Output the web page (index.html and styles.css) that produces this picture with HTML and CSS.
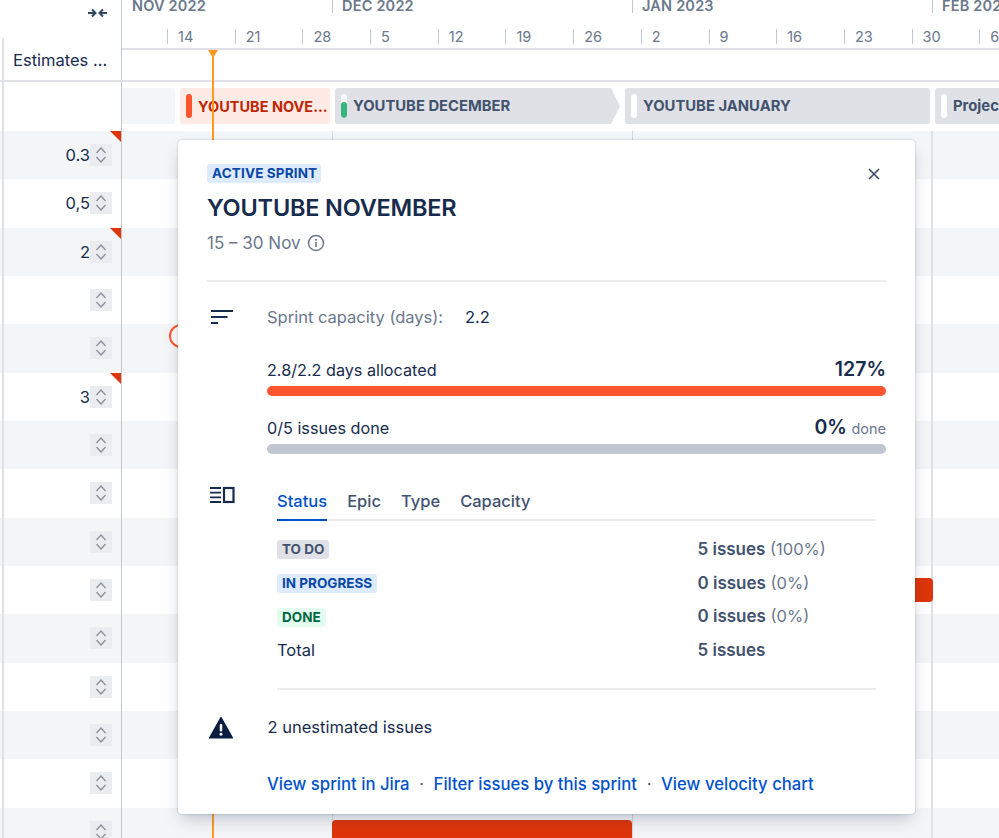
FILE: index.html
```html
<!DOCTYPE html>
<html lang="en">
<head>
<meta charset="utf-8">
<title>Sprint timeline</title>
<link rel="stylesheet" href="styles.css">
</head>
<body>
<div class="app">
  <header class="head">
    <div class="head-left">
      <div class="collapse">
        <svg width="22" height="10" viewBox="0 0 22 10"><path d="M1 5h7M5 1.500 8.500 5 5 8.500M20 5h-7M16 1.500 12.500 5 16 8.500" fill="none" stroke="#344563" stroke-width="2"/></svg>
      </div>
      <div class="col-title">Estimates ...</div>
    </div>
    <div class="head-right">
      <div class="months">
        <div class="month m-first">NOV 2022</div>
        <div class="month">DEC 2022</div>
        <div class="month">JAN 2023</div>
        <div class="month">FEB 2023</div>
      </div>
      <div class="weeks">
        <div class="week">14</div><div class="week">21</div><div class="week">28</div><div class="week">5</div><div class="week">12</div><div class="week">19</div><div class="week">26</div><div class="week">2</div><div class="week">9</div><div class="week">16</div><div class="week">23</div><div class="week">30</div><div class="week">6</div>
      </div>
      <div class="head-empty"></div>
    </div>
  </header>

  <div class="sprints">
    <div class="left-cell"></div>
    <div class="strip">
      <div class="sprint s-past"></div>
      <div class="sprint s-active"><span class="pill pill-red"></span><span class="s-name">YOUTUBE NOVE...</span></div>
      <div class="sprint s-arrow"><span class="pill pill-white"><span class="pill-green"></span></span><span class="s-name">YOUTUBE DECEMBER</span></div>
      <div class="sprint s-jan"><span class="pill pill-white"></span><span class="s-name">YOUTUBE JANUARY</span></div>
      <div class="sprint s-proj"><span class="pill pill-white"></span><span class="s-name">Project</span></div>
    </div>
  </div>

  <main class="rows">
    <div class="row alt"><div class="left-cell est flag"><span>0.3</span><span class="step"><svg width="14" height="20" viewBox="0 0 14 20"><path d="M2.500 8 7 3 11.500 8M2.500 12 7 17 11.500 12"/></svg></span></div></div>
    <div class="row"><div class="left-cell est"><span>0,5</span><span class="step"><svg width="14" height="20" viewBox="0 0 14 20"><path d="M2.500 8 7 3 11.500 8M2.500 12 7 17 11.500 12"/></svg></span></div></div>
    <div class="row alt"><div class="left-cell est flag"><span>2</span><span class="step"><svg width="14" height="20" viewBox="0 0 14 20"><path d="M2.500 8 7 3 11.500 8M2.500 12 7 17 11.500 12"/></svg></span></div></div>
    <div class="row"><div class="left-cell est"><span class="step"><svg width="14" height="20" viewBox="0 0 14 20"><path d="M2.500 8 7 3 11.500 8M2.500 12 7 17 11.500 12"/></svg></span></div></div>
    <div class="row alt"><div class="left-cell est"><span class="step"><svg width="14" height="20" viewBox="0 0 14 20"><path d="M2.500 8 7 3 11.500 8M2.500 12 7 17 11.500 12"/></svg></span></div></div>
    <div class="row"><div class="left-cell est flag"><span>3</span><span class="step"><svg width="14" height="20" viewBox="0 0 14 20"><path d="M2.500 8 7 3 11.500 8M2.500 12 7 17 11.500 12"/></svg></span></div></div>
    <div class="row alt"><div class="left-cell est"><span class="step"><svg width="14" height="20" viewBox="0 0 14 20"><path d="M2.500 8 7 3 11.500 8M2.500 12 7 17 11.500 12"/></svg></span></div></div>
    <div class="row"><div class="left-cell est"><span class="step"><svg width="14" height="20" viewBox="0 0 14 20"><path d="M2.500 8 7 3 11.500 8M2.500 12 7 17 11.500 12"/></svg></span></div></div>
    <div class="row alt"><div class="left-cell est"><span class="step"><svg width="14" height="20" viewBox="0 0 14 20"><path d="M2.500 8 7 3 11.500 8M2.500 12 7 17 11.500 12"/></svg></span></div></div>
    <div class="row"><div class="left-cell est"><span class="step"><svg width="14" height="20" viewBox="0 0 14 20"><path d="M2.500 8 7 3 11.500 8M2.500 12 7 17 11.500 12"/></svg></span></div></div>
    <div class="row alt"><div class="left-cell est"><span class="step"><svg width="14" height="20" viewBox="0 0 14 20"><path d="M2.500 8 7 3 11.500 8M2.500 12 7 17 11.500 12"/></svg></span></div></div>
    <div class="row"><div class="left-cell est"><span class="step"><svg width="14" height="20" viewBox="0 0 14 20"><path d="M2.500 8 7 3 11.500 8M2.500 12 7 17 11.500 12"/></svg></span></div></div>
    <div class="row alt"><div class="left-cell est"><span class="step"><svg width="14" height="20" viewBox="0 0 14 20"><path d="M2.500 8 7 3 11.500 8M2.500 12 7 17 11.500 12"/></svg></span></div></div>
    <div class="row"><div class="left-cell est"><span class="step"><svg width="14" height="20" viewBox="0 0 14 20"><path d="M2.500 8 7 3 11.500 8M2.500 12 7 17 11.500 12"/></svg></span></div></div>
    <div class="row alt"><div class="left-cell est"><span class="step"><svg width="14" height="20" viewBox="0 0 14 20"><path d="M2.500 8 7 3 11.500 8M2.500 12 7 17 11.500 12"/></svg></span></div></div>
    <div class="grid-line gl-1"></div>
    <div class="grid-line gl-2"></div>
    <div class="grid-line gl-3"></div>
    <div class="bar bar-end"></div>
    <div class="bar bar-bottom"></div>
    <div class="ring"></div>
  </main>

  <div class="today"></div>

  <section class="popup">
    <svg class="close" width="12" height="12" viewBox="0 0 12 12"><path d="M1 1l10 10M11 1 1 11" fill="none" stroke="#344563" stroke-width="1.500"/></svg>
    <span class="loz loz-blue loz-head">ACTIVE SPRINT</span>
    <h1 class="title">YOUTUBE NOVEMBER</h1>
    <div class="dates">15 – 30 Nov
      <svg width="18" height="18" viewBox="0 0 18 18"><circle cx="9" cy="9" r="7.500" fill="none" stroke="#6B778C" stroke-width="1.500"/><rect x="8.200" y="8" width="1.600" height="5" fill="#6B778C"/><rect x="8.200" y="5" width="1.600" height="1.700" fill="#6B778C"/></svg>
    </div>
    <hr class="rule">

    <div class="block">
      <svg class="sec-icon" width="24" height="16" viewBox="0 0 24 16"><path d="M1 2h22M1 8h16.500M1 14h7" fill="none" stroke="#172B4D" stroke-width="2.200"/></svg>
      <div class="block-body">
        <div class="capacity"><span class="cap-label">Sprint capacity (days):</span><span class="cap-value">2.2</span></div>
        <div class="meter-head h-first"><span>2.8/2.2 days allocated</span><b class="pct">127%</b></div>
        <div class="meter meter-red"></div>
        <div class="meter-head h-second"><span>0/5 issues done</span><span><b class="pct">0%</b> <span class="muted small">done</span></span></div>
        <div class="meter meter-gray"></div>
      </div>
    </div>

    <div class="block block-tabs">
      <svg class="sec-icon" width="26" height="18" viewBox="0 0 26 18"><path d="M1 2h11M1 6.700h11M1 11.300h11M1 16h11" fill="none" stroke="#172B4D" stroke-width="1.800"/><rect x="15" y="2" width="9.500" height="14" fill="none" stroke="#172B4D" stroke-width="2.200"/></svg>
      <div class="tabs-wrap">
        <nav class="tabs">
          <span class="tab tab-on">Status</span><span class="tab">Epic</span><span class="tab">Type</span><span class="tab">Capacity</span>
        </nav>
        <div class="tbl">
          <div class="tbl-row"><div class="tbl-key"><span class="loz loz-gray">TO DO</span></div><div><b>5 issues</b> <span class="muted">(100%)</span></div></div>
          <div class="tbl-row"><div class="tbl-key"><span class="loz loz-blue">IN PROGRESS</span></div><div><b>0 issues</b> <span class="muted">(0%)</span></div></div>
          <div class="tbl-row"><div class="tbl-key"><span class="loz loz-green">DONE</span></div><div><b>0 issues</b> <span class="muted">(0%)</span></div></div>
          <div class="tbl-row"><div class="tbl-key">Total</div><div><b>5 issues</b></div></div>
        </div>
        <hr class="rule rule-inner">
      </div>
    </div>

    <div class="warn">
      <svg width="24" height="24" viewBox="0.500 0.500 25 23.500"><path d="M13 1.500 24.800 22.500H1.200Z" fill="#091E42" stroke="#091E42" stroke-width="1.500" stroke-linejoin="round"/><rect x="11.700" y="8" width="2.600" height="8" rx="1.200" fill="#fff"/><circle cx="13" cy="18.800" r="1.500" fill="#fff"/></svg>
      <span>2 unestimated issues</span>
    </div>

    <div class="links">
      <a class="lnk">View sprint in Jira</a><span class="dot">·</span><a class="lnk">Filter issues by this sprint</a><span class="dot">·</span><a class="lnk">View velocity chart</a>
    </div>
  </section>
</div>
</body>
</html>
```

FILE: styles.css
```css
* { box-sizing: border-box; }
html, body { margin: 0; padding: 0; height: 100%; overflow: hidden; }
body { font-family: Inter, "Liberation Sans", sans-serif; font-size: 16.500px; color: #172B4D; background: #fff; }
.app { position: relative; width: 999px; height: 838px; overflow: hidden; }

.head { display: flex; height: 82px; border-bottom: 2px solid #DFE1E6; }
.head-left { width: 122px; flex: none; border-right: 1px solid #C1C7D0; }
.collapse { height: 38px; padding: 8px 0 0 87px; display: flex; align-items: flex-start; }
.col-title { height: 42px; margin-left: 2px; border-left: 2px solid #DFE1E6; padding-left: 9px; line-height: 44px; white-space: nowrap; }
.head-right { flex: 1; min-width: 0; overflow: hidden; }
.months { display: flex; height: 26px; }
.month { flex: none; width: 300px; height: 26px; padding-left: 10px; font-size: 14.500px; font-weight: 600; letter-spacing: .2px; color: #6B778C; line-height: 12px; white-space: nowrap; position: relative; }
.month::before { content: ""; position: absolute; left: 0; top: 0; width: 1px; height: 13px; background: #C1C7D0; }
.m-first { width: 210px; }
.m-first::before { display: none; }
.weeks { display: flex; height: 24px; padding-left: 45px; border-bottom: 2px solid #DFE1E6; }
.week { flex: none; width: 67.700px; height: 15px; margin-top: 3px; padding-left: 10px; border-left: 1px solid #C1C7D0; font-size: 14.500px; color: #6B778C; line-height: 15px; }
.head-empty { height: 30px; }

.left-cell { width: 122px; flex: none; margin-left: 0; border-right: 1px solid #C1C7D0; }
.sprints { display: flex; height: 49px; }
.sprints .left-cell { position: relative; }
.strip { flex: 1; min-width: 0; display: flex; gap: 5px; padding-top: 6px; overflow: hidden; }
.sprint { flex: none; height: 36px; border-radius: 3px; background: #DFE1E6; display: flex; align-items: center; gap: 6px; padding-left: 6px; font-size: 14.800px; font-weight: 700; color: #42526E; white-space: nowrap; }
.s-past { width: 53px; background: #F4F5F7; border-radius: 0 3px 3px 0; }
.s-active { width: 150px; background: #FFEBE6; color: #BF2600; overflow: hidden; font-size: 14.500px; }
.s-arrow { width: 285px; clip-path: polygon(0 0, 276px 0, 285px 50%, 276px 100%, 0 100%); }
.s-jan { width: 305px; }
.s-proj { width: 120px; }
.pill { width: 6px; height: 24px; border-radius: 3px; background: #fff; flex: none; display: flex; align-items: flex-end; overflow: hidden; }
.pill-red { background: #FF5630; }
.pill-green { display: block; width: 100%; height: 16px; background: #36B37E; border-radius: 3px; }

.rows { position: relative; }
.row { display: flex; height: 48.333px; }
.alt { background: #F4F5F7; }
.est { position: relative; display: flex; justify-content: flex-end; align-items: center; padding-right: 9px; }
.flag::after { content: ""; position: absolute; right: 0; top: 0; width: 0; height: 0; border-style: solid; border-width: 0 11px 11px 0; border-color: transparent #DE350B transparent transparent; }
.step { width: 22px; height: 22px; background: #EBECF0; display: flex; align-items: center; justify-content: center; }
.step svg { fill: none; stroke: #8A8F9C; stroke-width: 1.300; }
.left-cell.est::before, .sprints .left-cell::before { content: ""; position: absolute; left: 2px; top: 0; bottom: 0; width: 2px; background: #DFE1E6; }

.grid-line { position: absolute; top: 0; bottom: 0; width: 1px; background: #D3D6DC; }
.gl-1 { left: 332px; }
.gl-2 { left: 632px; }
.gl-3 { left: 931px; width: 2px; background: #DFE1E6; }
.bar { position: absolute; background: #DE350B; }
.bar-end { left: 900px; top: 447px; width: 33px; height: 24px; border-radius: 4px; }
.bar-bottom { left: 332px; top: 689px; width: 300px; height: 30px; border-radius: 4px 4px 0 0; }
.ring { position: absolute; left: 169px; top: 193px; width: 24px; height: 24px; border: 2px solid #FF5630; border-radius: 50%; background: #fff; }

.today { position: absolute; left: 212px; top: 50px; bottom: 0; width: 2px; background: #FF991F; }
.today::before { content: ""; position: absolute; left: -4px; top: 0; border-style: solid; border-width: 8px 5px 0 5px; border-color: #FF991F transparent transparent transparent; }

.popup { position: absolute; left: 178px; top: 140px; width: 737px; height: 674px; background: #fff; border-radius: 4px; box-shadow: 0 8px 16px -4px rgba(9,30,66,.25), 0 0 2px rgba(9,30,66,.31); padding: 24px 29px 0; }
.close { position: absolute; left: 690px; top: 28px; }
.loz { display: inline-block; height: 19px; padding: 0 5px; border-radius: 3px; font-size: 13.500px; font-weight: 700; line-height: 19px; white-space: nowrap; }
.loz-blue { background: #DEEBFF; color: #0747A6; }
.loz-gray { background: #DFE1E6; color: #42526E; }
.loz-green { background: #E3FCEF; color: #006644; }
.loz-head { display: block; width: 114px; letter-spacing: .15px; }
.title { margin: 10px 0 0; font-size: 23.500px; font-weight: 600; line-height: 30px; letter-spacing: -.2px; color: #172B4D; }
.dates { display: flex; align-items: center; gap: 6px; margin-top: 7px; height: 26px; font-size: 17px; color: #6B778C; }
.rule { border: 0; height: 2px; background: #EBECF0; margin: 24px 0 0; }
.block { display: flex; }
.block > .sec-icon { flex: none; margin-top: 27px; margin-left: 3px; }
.block-body { flex: 1; min-width: 0; margin-top: 22px; margin-left: 33px; }
.capacity { height: 26px; line-height: 26px; display: flex; }
.cap-label { color: #6B778C; width: 198px; }
.meter-head { display: flex; justify-content: space-between; align-items: baseline; height: 26px; line-height: 26px; font-size: 16.200px; }
.h-first { margin-top: 26px; }
.h-second { margin-top: 18px; }
.pct { font-size: 19.500px; font-weight: 600; }
.small { font-size: 14.500px; }
.muted { color: #6B778C; }
.meter { height: 10px; border-radius: 5px; margin-top: 4px; }
.meter-red { background: #FF5630; }
.meter-gray { background: #C1C7D0; }
.block-tabs > .sec-icon { margin-top: 32px; margin-left: 2px; }
.tabs-wrap { flex: 1; min-width: 0; margin: 0 10px 0 42px; }
.tabs { display: flex; gap: 20px; margin-top: 26px; height: 41px; border-bottom: 2px solid #EBECF0; }
.tab { height: 41px; padding-top: 8px; line-height: 26px; color: #42526E; font-weight: 500; }
.tab-on { color: #0052CC; border-bottom: 2px solid #0052CC; }
.tbl { margin-top: 11px; }
.tbl-row { display: flex; align-items: center; height: 33.700px; }
.tbl-key { width: 420.500px; flex: none; }
.tbl-row b { font-size: 17px; font-weight: 600; color: #42526E; }
.rule-inner { margin: 21px 0 0; }
.warn { display: flex; align-items: center; gap: 34.500px; margin-top: 24px; margin-left: 2px; height: 26px; }
.warn svg { margin-top: 3px; }
.links { display: flex; margin: 31px 0 0 60px; height: 26px; line-height: 26px; font-size: 16.700px; white-space: nowrap; }
.lnk { color: #0052CC; font-weight: 500; }
.dot { width: 24px; text-align: center; color: #42526E; }
```
